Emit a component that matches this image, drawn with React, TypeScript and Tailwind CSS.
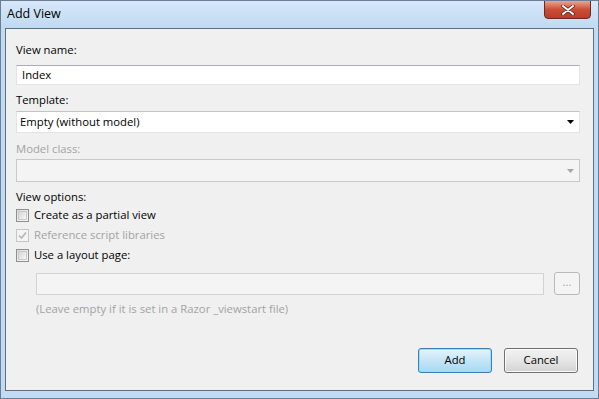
import React from "react";

const font = { fontFamily: '"Open Sans", "Noto Sans", sans-serif' };

function Checkbox({ checked, disabled }: { checked?: boolean; disabled?: boolean }) {
  return (
    <div
      className={`w-[13px] h-[13px] border flex items-center justify-center ${
        disabled ? "border-[#c6c6c6] bg-[#f4f4f4]" : "border-[#8e8f8f] bg-gradient-to-br from-[#dcdcdc] to-[#fbfbfb]"
      }`}
    >
      {!disabled && <div className="w-[9px] h-[9px] border border-[#c9c9c9] bg-gradient-to-br from-[#d6d6d6] to-[#f8f8f8]" />}
      {checked && (
        <svg width="9" height="9" viewBox="0 0 9 9">
          <path d="M1 4.5 L3.5 7 L8 1.5" fill="none" stroke={disabled ? "#b5b5b5" : "#333"} strokeWidth="1.6" />
        </svg>
      )}
    </div>
  );
}

function Arrow({ disabled }: { disabled?: boolean }) {
  return (
    <svg width="7" height="4" viewBox="0 0 7 4">
      <path d="M0 0 L7 0 L3.5 4 Z" fill={disabled ? "#a6a6a6" : "#000"} />
    </svg>
  );
}

export default function App() {
  return (
    <div
      className="w-[599px] h-[399px] bg-[#c2dbf3] border border-[#6b7e93] flex flex-col text-[11.3px] text-black overflow-hidden"
      style={font}
    >
      <div className="h-[27px] shrink-0 flex items-start justify-between bg-gradient-to-b from-[#d7e8f9] to-[#c0d9f2]">
        <div className="pl-[6px] pt-[4px] leading-[17px] text-[12.5px] text-black">Add View</div>
        <div className="mr-[7px] -mt-px w-[47px] h-[19px] rounded-b-[4px] border border-[#6e2a22] bg-gradient-to-b from-[#e8a493] via-[#c74f36] to-[#c0392a] flex items-center justify-center">
          <svg width="14" height="10" viewBox="0 0 14 10">
            <path d="M2 1 L12 9 M12 1 L2 9" stroke="#4a1a14" strokeWidth="3.4" strokeLinecap="round" />
            <path d="M2 1 L12 9 M12 1 L2 9" stroke="#ffffff" strokeWidth="2" strokeLinecap="round" />
          </svg>
        </div>
      </div>
      <div className="mx-[4px] h-[363px] shrink-0 border border-[#5d6f84] bg-[#f0f0f0] flex flex-col pl-[10px] pr-[13px] pt-[13px]">
        <div className="leading-[16px]">View name:</div>
        <div className="mt-[7px] h-[20px] bg-white border border-[#e3e3e3] border-t-[#abadb3] flex items-center pl-[5px] leading-[16px]">
          Index
        </div>
        <div className="mt-[7px] leading-[16px]">Template:</div>
        <div className="mt-[3px] h-[22px] bg-white border border-[#e3e3e3] border-t-[#c4c4c4] flex items-center justify-between pl-[3px] pr-[5px] leading-[16px]">
          <span>Empty (without model)</span>
          <Arrow />
        </div>
        <div className="mt-[8px] leading-[16px] text-[#a3a3a3]">Model class:</div>
        <div className="mt-[2px] h-[23px] bg-[#f4f4f4] border border-[#c9c9c9] flex items-center justify-end pr-[5px]">
          <Arrow disabled />
        </div>
        <div className="mt-[7px] leading-[16px]">View options:</div>
        <div className="h-[20px] flex items-center gap-[5px]">
          <Checkbox />
          <span>Create as a partial view</span>
        </div>
        <div className="h-[20px] flex items-center gap-[5px] text-[#a3a3a3]">
          <Checkbox checked disabled />
          <span>Reference script libraries</span>
        </div>
        <div className="h-[20px] flex items-center gap-[5px]">
          <Checkbox />
          <span>Use a layout page:</span>
        </div>
        <div className="mt-[7px] pl-[20px] flex items-center gap-[10px]">
          <div className="flex-1 h-[22px] bg-[#f4f4f4] border border-[#d3d3d3]" />
          <div className="w-[26px] h-[23px] rounded-[3px] border border-[#b9b9b9] bg-[#f4f4f4] flex items-center justify-center text-[#a3a3a3] leading-none pb-[3px]">
            ...
          </div>
        </div>
        <div className="mt-[6px] pl-[20px] leading-[16px] text-[#a3a3a3]">
          (Leave empty if it is set in a Razor _viewstart file)
        </div>
        <div className="mt-[31px] flex justify-end gap-[12px] pr-[2px]">
          <div className="w-[74px] h-[25px] rounded-[3px] border border-[#3c7fb1] bg-gradient-to-b from-[#e5f4fc] via-[#c4e5f6] to-[#a7d9f5] flex items-center justify-center shadow-[inset_0_0_0_1px_#9fdbf7]">
            Add
          </div>
          <div className="w-[74px] h-[25px] rounded-[3px] border border-[#707070] bg-gradient-to-b from-[#f2f2f2] via-[#e6e6e6] to-[#d2d2d2] flex items-center justify-center shadow-[inset_0_0_0_1px_#fbfbfb]">
            Cancel
          </div>
        </div>
      </div>
    </div>
  );
}
